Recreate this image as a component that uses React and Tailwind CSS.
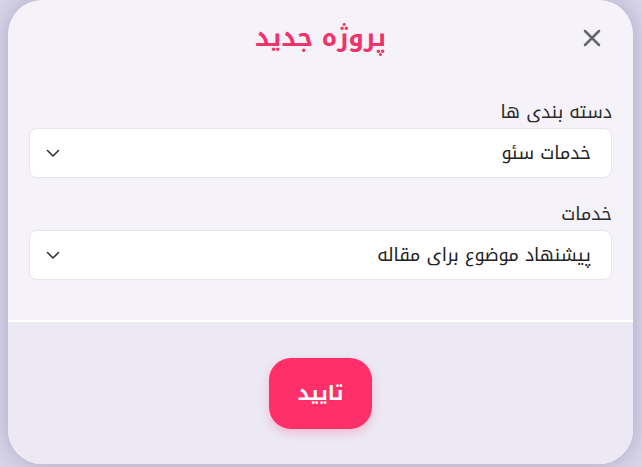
import React from "react";

function Chevron() {
  return (
    <svg width="14" height="14" viewBox="0 0 14 14" fill="none" stroke="#333" strokeWidth="1.6" strokeLinecap="round" strokeLinejoin="round">
      <path d="M1.5 4.5l5.5 5.5 5.5-5.5" />
    </svg>
  );
}

function SelectBox({ value }) {
  return (
    <div className="flex h-[50px] items-center justify-between rounded-lg border border-[#e6e4ec] bg-white pr-[20px] pl-[16px]">
      <span className="text-[18px] leading-[24px] text-[#222]">{value}</span>
      <Chevron />
    </div>
  );
}

function Field({ label, value }) {
  return (
    <div className="flex flex-col gap-[4px]">
      <label className="h-[24px] text-[18px] leading-[24px] text-[#2a2a2a]">{label}</label>
      <SelectBox value={value} />
    </div>
  );
}

export default function App() {
  return (
    <div className="h-[467px] w-[642px] overflow-hidden bg-[#d9d6e8] pr-[9px] pl-[8px] font-['Noto_Kufi_Arabic','Noto_Sans_Arabic',sans-serif]">
      <div dir="rtl" className="flex h-[464px] flex-col overflow-hidden rounded-[34px] bg-[#f5f3f9] shadow-[0_0_24px_rgba(90,80,140,0.35)]">
        <div className="relative flex h-[76px] items-center justify-center">
          <h1 className="text-[25px] leading-[32px] font-bold text-[#f2336b]">پروژه جدید</h1>
          <button className="absolute top-[28px] right-[31px] text-[#666670]">
            <svg width="20" height="20" viewBox="0 0 20 20" fill="none" stroke="currentColor" strokeWidth="2.5" strokeLinecap="round">
              <path d="M3 3l14 14M17 3L3 17" />
            </svg>
          </button>
        </div>
        <div className="flex flex-col gap-[24px] px-[21px] pt-[24px] pb-[40px]">
          <Field label="دسته بندی ها" value="خدمات سئو" />
          <Field label="خدمات" value="پیشنهاد موضوع برای مقاله" />
        </div>
        <div className="h-[2px] bg-white" />
        <div className="flex flex-1 items-center justify-center bg-[#ece9f4]">
          <button className="flex h-[71px] w-[103px] items-center justify-center rounded-[22px] bg-[#ff2f69] text-[20px] leading-[28px] font-bold text-white shadow-[0_4px_10px_rgba(255,47,105,0.25)]">
            تایید
          </button>
        </div>
      </div>
    </div>
  );
}
